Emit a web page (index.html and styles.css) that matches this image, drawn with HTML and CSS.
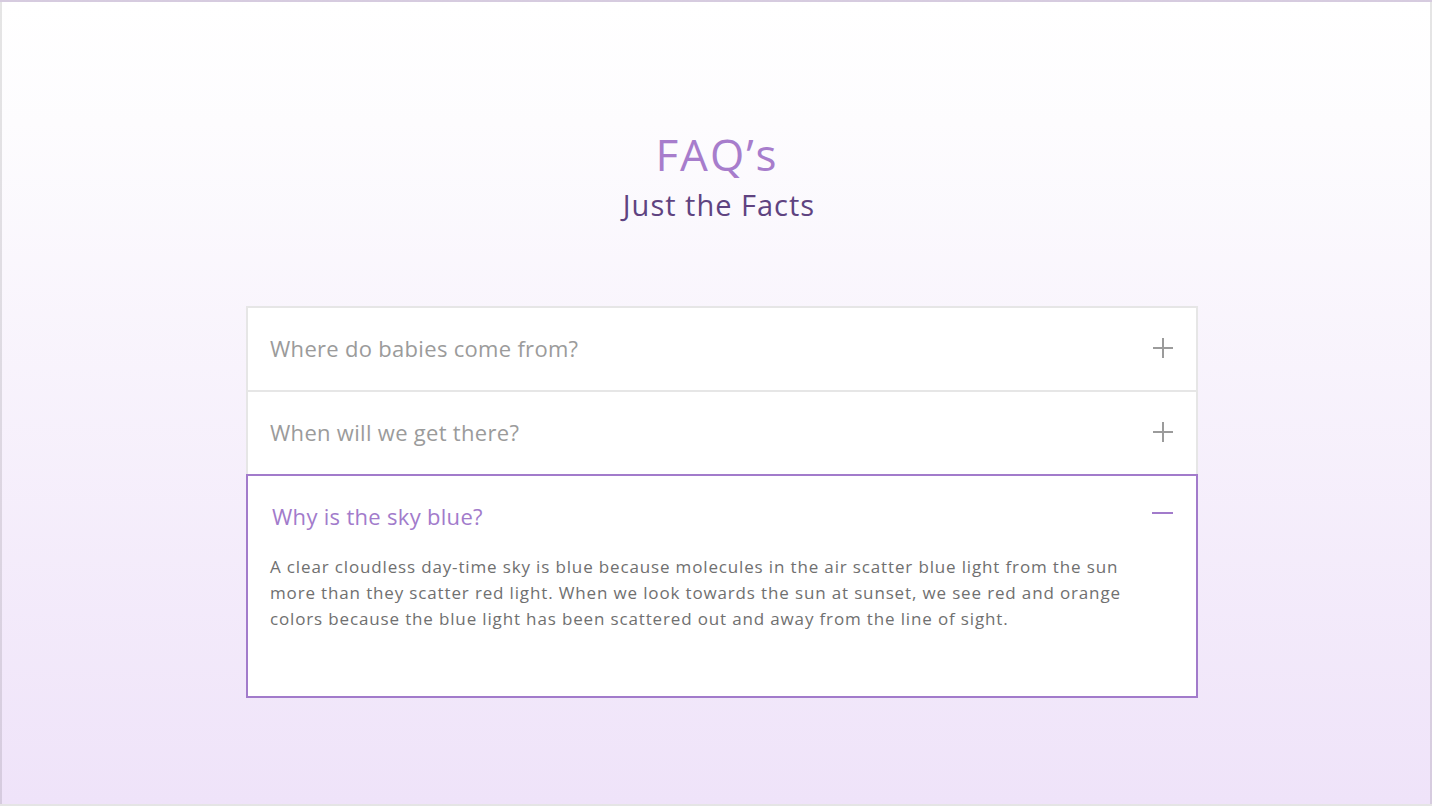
FILE: index.html
```html
<!DOCTYPE html>
<html lang="en">
<head>
<meta charset="utf-8">
<title>FAQ's</title>
<link rel="stylesheet" href="styles.css">
</head>
<body>
<main class="page">
  <header class="heading">
    <h1 class="title">FAQ’s</h1>
    <h2 class="subtitle">Just the Facts</h2>
  </header>
  <section class="faq">
    <div class="item">
      <div class="question">
        <span class="q-text">Where do babies come from?</span>
        <svg class="icon" width="20" height="20" viewBox="0 0 20 20"><path d="M10 0V20M0 10H20" stroke="#9b9b9b" stroke-width="2" fill="none"/></svg>
      </div>
    </div>
    <div class="item">
      <div class="question">
        <span class="q-text">When will we get there?</span>
        <svg class="icon" width="20" height="20" viewBox="0 0 20 20"><path d="M10 0V20M0 10H20" stroke="#9b9b9b" stroke-width="2" fill="none"/></svg>
      </div>
    </div>
    <div class="item open">
      <div class="question">
        <span class="q-text">Why is the sky blue?</span>
        <svg class="icon minus" width="21" height="20" viewBox="0 0 21 20"><path d="M0 7H21" stroke="#a27bcb" stroke-width="2" fill="none"/></svg>
      </div>
      <p class="answer">A clear cloudless day-time sky is blue because molecules in the air scatter blue light from the sun more than they scatter red light. When we look towards the sun at sunset, we see red and orange colors because the blue light has been scattered out and away from the line of sight.</p>
    </div>
  </section>
</main>
</body>
</html>
```

FILE: styles.css
```css
html, body {
  margin: 0;
  padding: 0;
  height: 100%;
}
body {
  font-family: "Open Sans", "Lato", sans-serif;
}
.page {
  box-sizing: border-box;
  height: 806px;
  border: 2px solid rgba(0, 0, 0, 0.1);
  background: linear-gradient(to bottom, #ffffff 0%, #fdfcfe 15%, #efe3f9 100%);
  padding-top: 124px;
}
.heading {
  text-align: center;
  padding-left: 2px;
}
.title {
  margin: 0;
  font-weight: 400;
  font-size: 44px;
  line-height: 56px;
  letter-spacing: 2px;
  color: #a77dcc;
}
.subtitle {
  margin: 0;
  font-weight: 400;
  font-size: 29px;
  line-height: 46px;
  letter-spacing: 1px;
  color: #5f4381;
  padding-left: 4px;
}
.faq {
  width: 952px;
  margin: 78px 0 0 244px;
  display: flex;
  flex-direction: column;
}
.item {
  background: #fff;
  border: 2px solid #e6e6e6;
  box-sizing: border-box;
}
.item + .item {
  margin-top: -2px;
}
.item.open {
  border-color: #a27bcb;
  padding-bottom: 64px;
}
.question {
  box-sizing: border-box;
  height: 82px;
  display: flex;
  align-items: center;
  justify-content: space-between;
  padding: 0 23px 3px 22px;
}
.q-text {
  font-size: 22px;
  letter-spacing: 0.3px;
  color: #9b9b9b;
}
.open .q-text {
  color: #a27bcb;
  padding-left: 2px;
}
.icon {
  display: block;
}
.answer {
  margin: -4px 0 0;
  padding: 0 51px 0 22px;
  font-size: 17px;
  line-height: 26px;
  letter-spacing: 0.85px;
  color: #707070;
}
```
